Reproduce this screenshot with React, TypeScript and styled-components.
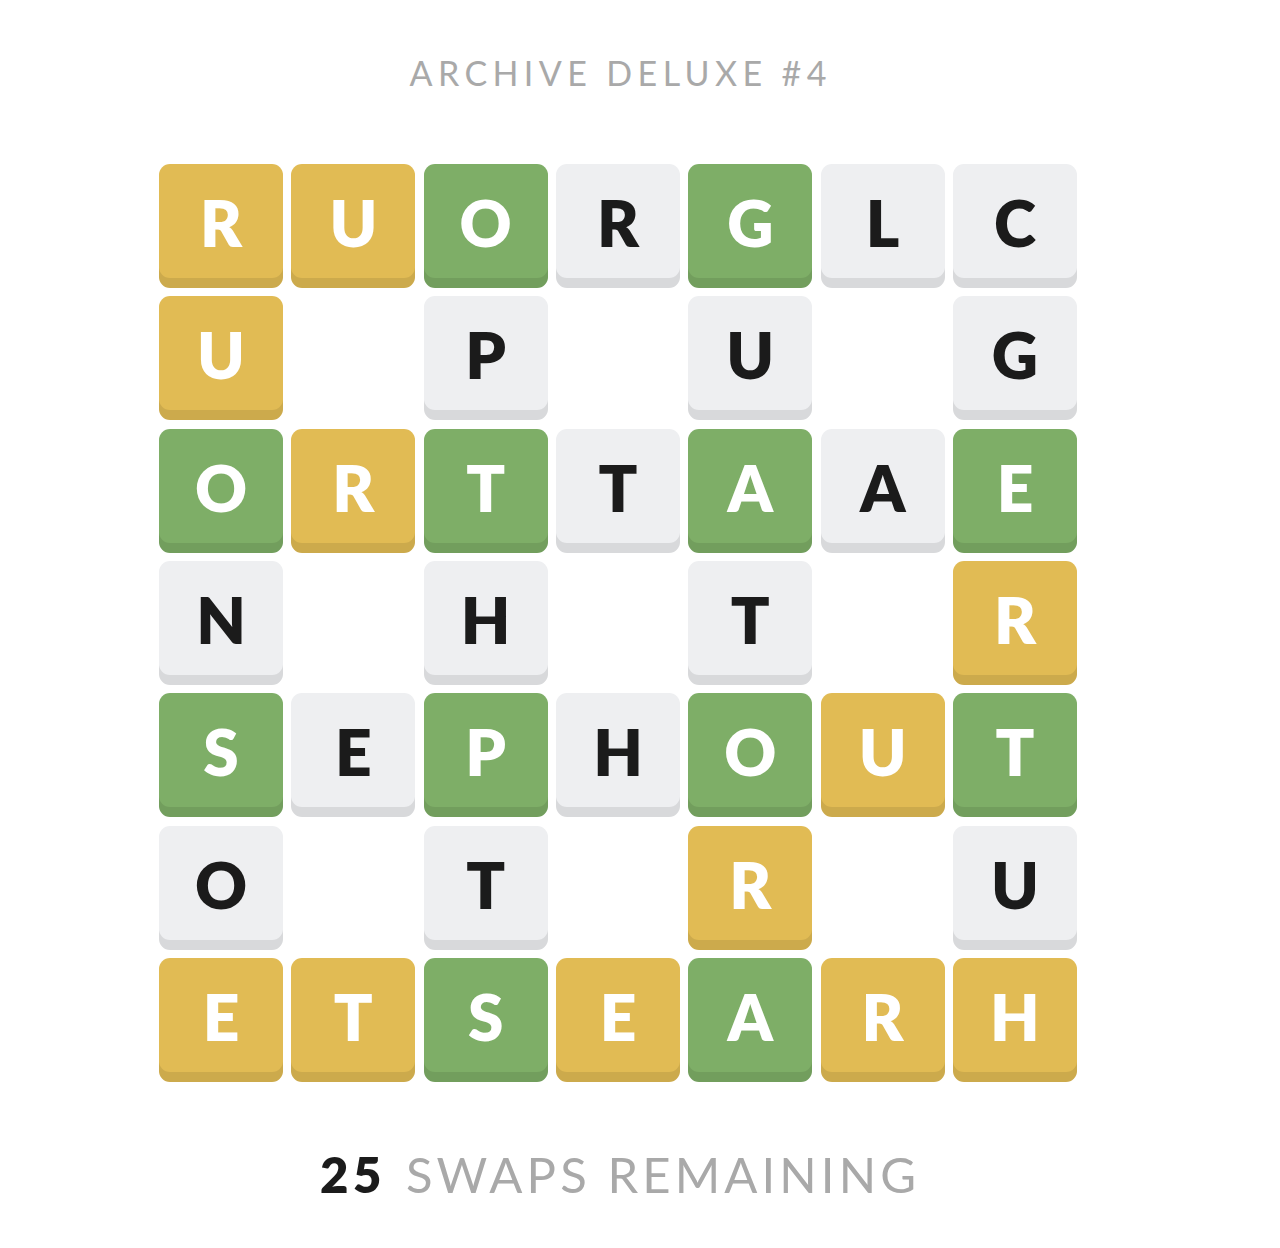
import React from "react";
import styled, { createGlobalStyle } from "styled-components";

const Global = createGlobalStyle`
  html, body { margin: 0; padding: 0; background: #ffffff; }
  body { font-family: "Lato", "Open Sans", sans-serif; }
`;

const Page = styled.main`
  width: 1236px;
  display: flex;
  flex-direction: column;
  align-items: center;
  padding-top: 52px;
`;

const Title = styled.h1`
  margin: 0;
  font-family: "Lato", sans-serif;
  font-weight: 400;
  font-size: 34px;
  line-height: 42px;
  letter-spacing: 5.4px;
  margin-right: -5.4px;
  color: #a9a9a9;
`;

const Board = styled.div`
  margin-top: 70px;
  display: grid;
  grid-template-columns: repeat(7, 124px);
  grid-auto-rows: 124px;
  gap: 8.33px;
`;

type Kind = "y" | "g" | "n";

const palette: Record<Kind, { bg: string; fg: string }> = {
  y: { bg: "#e1bb54", fg: "#ffffff" },
  g: { bg: "#7eae67", fg: "#ffffff" },
  n: { bg: "#eeeff1", fg: "#1b1b1b" },
};

const Tile = styled.div<{ $kind: Kind }>`
  box-sizing: border-box;
  border-radius: 11px;
  background: ${(p) => palette[p.$kind].bg};
  color: ${(p) => palette[p.$kind].fg};
  box-shadow: inset 0 -10px 0 rgba(0, 0, 0, 0.09);
  display: flex;
  align-items: center;
  justify-content: center;
  padding-bottom: 6px;
  font-family: "Lato", sans-serif;
  font-weight: 800;
  font-size: 64px;
  line-height: 1;
  user-select: none;
`;

const Empty = styled.div``;

const Footer = styled.p`
  margin: 64px 0 0;
  font-family: "Lato", sans-serif;
  font-size: 49px;
  line-height: 56px;
  letter-spacing: 4.1px;
  margin-right: -4.1px;
  color: #a9a9a9;
  font-weight: 400;
`;

const Count = styled.span`
  color: #1b1b1b;
  font-weight: 800;
  letter-spacing: 4.6px;
  margin-right: 20px;
`;

const rows: string[] = [
  "Ry Uy Og Rn Gg Ln Cn",
  "Uy __ Pn __ Un __ Gn",
  "Og Ry Tg Tn Ag An Eg",
  "Nn __ Hn __ Tn __ Ry",
  "Sg En Pg Hn Og Uy Tg",
  "On __ Tn __ Ry __ Un",
  "Ey Ty Sg Ey Ag Ry Hy",
];

export default function App() {
  return (
    <>
      <Global />
      <Page>
        <Title>ARCHIVE DELUXE #4</Title>
        <Board>
          {rows.flatMap((row, r) =>
            row.split(" ").map((cell, c) =>
              cell === "__" ? (
                <Empty key={`${r}-${c}`} />
              ) : (
                <Tile key={`${r}-${c}`} $kind={cell[1] as Kind}>
                  {cell[0]}
                </Tile>
              )
            )
          )}
        </Board>
        <Footer>
          <Count>25</Count>SWAPS REMAINING
        </Footer>
      </Page>
    </>
  );
}
